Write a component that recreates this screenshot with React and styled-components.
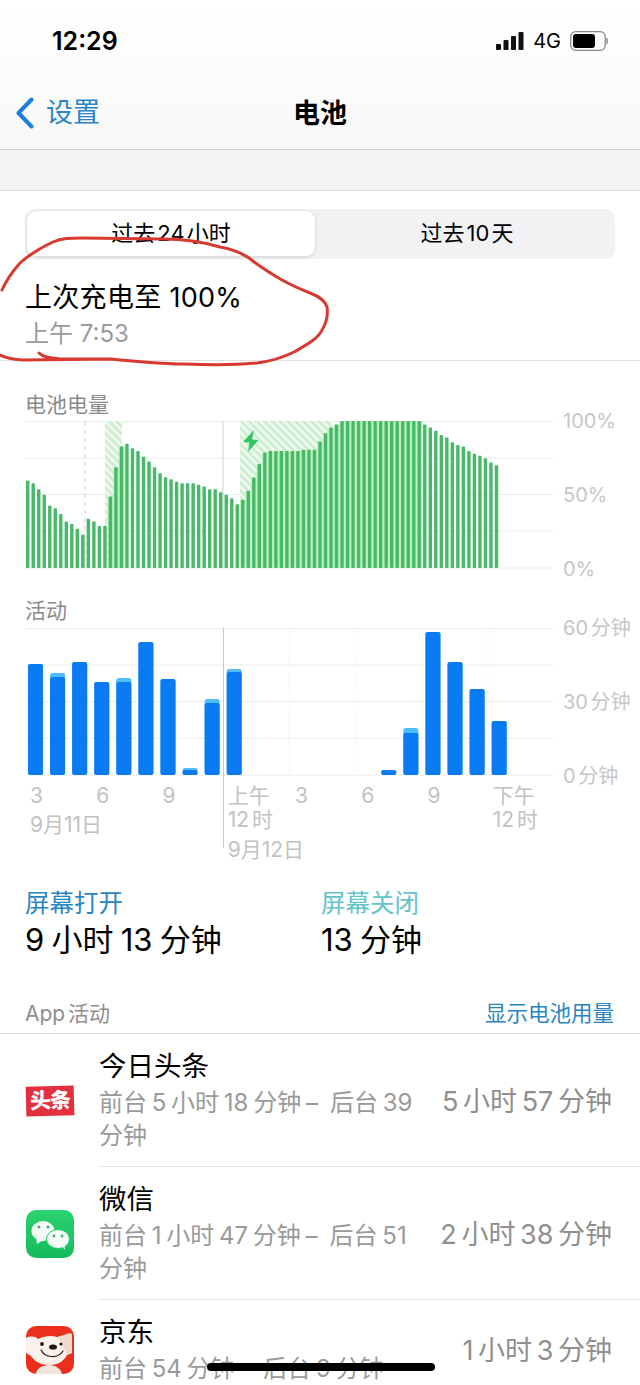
import React from 'react';
import styled, { createGlobalStyle } from 'styled-components';

const FONT = 'Inter, "Noto Sans CJK SC", sans-serif';

const GlobalStyle = createGlobalStyle`
  html, body {
    margin: 0;
    padding: 0;
    background: #fff;
  }
`;

const Screen = styled.div`
  position: relative;
  width: 640px;
  height: 1385px;
  overflow: hidden;
  background: #fff;
  color: #000;
  font-family: ${FONT};
`;

// top chrome
const Header = styled.header`
  height: 149px;
  background: linear-gradient(#ffffff, #f8f8f9);
  border-bottom: 1px solid #cfd0d2;
`;

const StatusBar = styled.div`
  height: 80px;
  display: flex;
  align-items: center;
  justify-content: space-between;
  padding: 2px 32px 0 52px;
  box-sizing: border-box;
`;

const Clock = styled.span`
  font-size: 25px;
  font-weight: 600;
`;

const StatusIcons = styled.div`
  display: flex;
  align-items: center;
  gap: 9px;
  font-size: 20px;
`;

const NavBar = styled.nav`
  position: relative;
  height: 69px;
  box-sizing: border-box;
  padding-bottom: 6px;
  display: flex;
  align-items: center;
  justify-content: center;
`;

const BackLink = styled.div`
  position: absolute;
  left: 15px;
  top: 15px;
  display: flex;
  align-items: center;
  gap: 12px;
  color: #2a84c6;
  font-size: 27px;
  line-height: 36px;
`;

const NavTitle = styled.h1`
  margin: 0;
  font-size: 27px;
  font-weight: 700;
`;

const Band = styled.div`
  height: 40px;
  background: #f3f4f6;
  border-bottom: 1px solid #dcdde0;
`;

// range switch
const Segments = styled.div`
  display: grid;
  grid-template-columns: 288px 1fr;
  margin: 18px 25px 0;
  height: 50px;
  padding: 2px 0 3px 2px;
  box-sizing: border-box;
  background: #f2f2f4;
  border-radius: 10px;
`;

const Segment = styled.div`
  display: flex;
  align-items: center;
  justify-content: center;
  box-sizing: border-box;
  padding-bottom: 5px;
  padding-left: ${(p) => (p.$active ? '0' : '4px')};
  font-size: 22px;
  word-spacing: -4px;
  border-radius: 9px;
  background: ${(p) => (p.$active ? '#fff' : 'transparent')};
  box-shadow: ${(p) => (p.$active ? '0 1px 4px rgba(0,0,0,.14)' : 'none')};
`;

const LastCharge = styled.section`
  height: 102px;
  padding: 20px 25px 0;
  box-sizing: border-box;
  border-bottom: 1px solid #e2e2e4;
`;

const ChargeTitle = styled.div`
  font-size: 27px;
  line-height: 38px;
  letter-spacing: 0.3px;
`;

const ChargeTime = styled.div`
  font-size: 24px;
  line-height: 33px;
  color: #9b9b9b;
`;

// charts
const ChartLabel = styled.div`
  padding: ${(p) => p.$top}px 0 ${(p) => p.$bottom}px 25px;
  font-size: 21px;
  line-height: 31px;
  color: #8a8a8a;
`;

const ChartRow = styled.div`
  display: flex;
  padding-left: 25px;
  gap: 8px;
`;

const ChartSvg = styled.svg`
  display: block;
  flex: none;
`;

const YAxis = styled.div`
  height: 148px;
  display: flex;
  flex-direction: column;
  justify-content: space-between;
`;

const YTick = styled.span`
  height: 0;
  display: flex;
  align-items: center;
  transform: translateY(${(p) => (p.$lift ? '-2px' : '0')});
  font-size: 20px;
  color: #c6c6c6;
  white-space: nowrap;
  word-spacing: -3px;
`;

const XAxis = styled.div`
  display: grid;
  grid-template-columns: repeat(8, 66.25px);
  padding-left: 25px;
  height: 94px;
`;

const XTick = styled.div`
  position: relative;
  padding-left: ${(p) => (p.$stack ? '4px' : '5px')};
  padding-top: 8px;
  font-size: 21px;
  line-height: 24px;
  color: #c2c2c2;
  white-space: nowrap;
  word-spacing: -3px;
`;

const TickDate = styled.div`
  padding-top: ${(p) => p.$gap}px;
`;

const ActivityMark = styled.div`
  position: absolute;
  left: 223px;
  top: 628px;
  width: 1px;
  height: 220px;
  background: #c9c9cb;
`;

// screen time summary
const Totals = styled.div`
  display: grid;
  grid-template-columns: 296px 1fr;
  padding: 16px 25px 0;
  height: 96px;
`;

const TotalLabel = styled.div`
  font-size: 24.5px;
  line-height: 34px;
  color: ${(p) => p.$color};
`;

const TotalValue = styled.div`
  font-size: 31px;
  line-height: 40px;
  word-spacing: -1.5px;
`;

// app list
const ListHead = styled.div`
  display: flex;
  align-items: center;
  justify-content: space-between;
  height: 52px;
  box-sizing: border-box;
  padding: 8px 26px 0 25px;
  border-bottom: 1px solid #dedee0;
  font-size: 21px;
  color: #8e8e8e;
  word-spacing: -3px;
`;

const ListLink = styled.span`
  color: #2a84c0;
  font-size: 21.5px;
`;

const AppRow = styled.div`
  display: flex;
  align-items: center;
`;

const AppIcon = styled.div`
  flex: none;
  width: 48px;
  height: 48px;
  margin: 0 25px 0 26px;
  display: flex;
  align-items: center;
`;

const RowBody = styled.div`
  flex: 1;
  display: flex;
  align-items: center;
  padding: 12px 28px 14px 0;
  border-bottom: ${(p) => (p.$last ? 'none' : '1px solid #e4e4e6')};
`;

const RowText = styled.div`
  width: 325px;
  flex: none;
`;

const AppName = styled.div`
  font-size: 27.5px;
  line-height: 40px;
`;

const AppDetail = styled.div`
  font-size: 24px;
  line-height: 33px;
  color: #9a9a9a;
  word-spacing: -2px;
`;

const AppTotal = styled.div`
  flex: 1;
  text-align: right;
  font-size: 27px;
  color: #8f8f8f;
  white-space: nowrap;
  word-spacing: -3px;
`;

const ToutiaoBadge = styled.div`
  flex: 1;
  height: 30px;
  background: #e2303f;
  color: #fff;
  font-size: 21px;
  font-weight: 900;
  line-height: 29px;
  text-align: center;
  letter-spacing: -1px;
  transform: rotate(-1.5deg);
`;

const HomeBar = styled.div`
  position: absolute;
  left: 207px;
  top: 1363px;
  width: 228px;
  height: 8px;
  border-radius: 4px;
  background: #000;
`;

const Scribble = styled.svg`
  position: absolute;
  left: 0;
  top: 0;
  pointer-events: none;
`;

const battery = [
  59.5, 57.7, 53.6, 49.8, 42.5, 40.7, 36.7, 31.7, 29.9, 26.7, 22.6, 33.5, 31.7, 28.5, 28.5, 48.6,
  68.6, 82.6, 84.6, 81.4, 79.6, 75.6, 72.4, 68.6, 64.5, 61.8, 60.4, 58.6, 57.7, 57.7, 57.7, 56.6,
  55.4, 53.6, 53.6, 51.6, 49.8, 47.5, 43.4, 46.4, 52.5, 61.5, 70.8, 78.5, 79.6, 79.6, 79.6, 79.6,
  79.6, 79.6, 80.5, 80.5, 80.5, 86, 91.6, 95.5, 97.7, 100, 100, 100, 100, 100, 100, 100, 100, 100,
  100, 100, 100, 100, 100, 100, 97.7, 95.6, 93.4, 90.5, 88.7, 85.5, 83.7, 82.6, 79.6, 77.8, 76.4,
  74.7, 71.7, 69.9,
];

const activity = [
  [111, 111], [98, 102], [113, 113], [93, 93], [93, 97], [133, 133], [96, 96], [5, 7], [72, 76], [103, 106],
  null, null, null, null, null, null,
  [5, 5], [42, 47], [143, 143], [113, 113], [86, 86], [54, 54],
];

const gridYs = [0.5, 37, 73.5, 110, 147];
const CHART_W = 530;
const CHART_H = 148;
const BAR_PITCH = 5.515;

// bars drawn while the phone was on the charger get a green fill in the gaps
const isCharging = (i) => (i >= 15 && i <= 17) || (i >= 39 && i <= 71);

const BatteryChart = () => (
  <ChartSvg width={CHART_W} height={CHART_H} viewBox={`0 0 ${CHART_W} ${CHART_H}`}>
    <defs>
      <pattern id="hatch" width="5.500" height="5.500" patternUnits="userSpaceOnUse" patternTransform="rotate(-45)">
        <rect width="5.500" height="5.500" fill="#cdeed1" />
        <rect width="2.750" height="5.500" fill="#f0faf1" />
      </pattern>
    </defs>
    {gridYs.map((y) => (
      <line key={y} x1="0" x2="528" y1={y} y2={y} stroke="#ececee" />
    ))}
    <line x1="60" x2="60" y1="0" y2="147" stroke="#d6d6d8" strokeDasharray="5 3" />
    <line x1="198" x2="198" y1="0" y2="147" stroke="#d2d2d4" />
    <rect x="80" y="0" width="17" height="147" fill="url(#hatch)" />
    <rect x="215" y="0" width="92" height="147" fill="url(#hatch)" />
    {battery.map((v, i) => {
      if (!isCharging(i)) return null;
      const h = (v / 100) * 147;
      return <rect key={i} x={i * BAR_PITCH} y={147 - h} width={BAR_PITCH + 0.5} height={h} fill="#bdf0c0" />;
    })}
    {battery.map((v, i) => {
      const h = (v / 100) * 147;
      return <rect key={i} x={1 + i * BAR_PITCH} y={147 - h} width="3.4" height={h} rx="0.8" fill="#48b968" />;
    })}
    <path d="M229 9 218 21l6.500.5L223 31l10.500-12-6.500-.5z" fill="#2fc55f" />
  </ChartSvg>
);

const ActivityChart = () => (
  <ChartSvg width={CHART_W} height={CHART_H} viewBox={`0 0 ${CHART_W} ${CHART_H}`}>
    {gridYs.map((y) => (
      <line key={y} x1="1" x2="528" y1={y} y2={y} stroke="#ececee" />
    ))}
    {[264, 330, 463].map((x) => (
      <line key={x} x1={x} x2={x} y1="0" y2="147" stroke="#f4f4f5" strokeDasharray="4 3" />
    ))}
    {activity.map((bar, i) => {
      if (!bar) return null;
      const x = 3 + i * 22.08;
      return (
        <g key={i}>
          <rect x={x} y={147 - bar[1]} width="15" height={bar[1]} rx="2.5" fill="#4fbdf8" />
          <rect x={x} y={147 - bar[0]} width="15" height={bar[0]} rx="2" fill="#0a7bf2" />
        </g>
      );
    })}
  </ChartSvg>
);

const WeChatIcon = () => (
  <svg width="48" height="48" viewBox="0 0 48 48">
    <defs>
      <linearGradient id="wx" x1="0" y1="0" x2="0" y2="1">
        <stop offset="0" stopColor="#2bd36f" />
        <stop offset="1" stopColor="#14bb5b" />
      </linearGradient>
    </defs>
    <rect width="48" height="48" rx="10" fill="url(#wx)" />
    <ellipse cx="17" cy="21" rx="11.500" ry="10" fill="#f4fbf7" />
    <path d="M10 27l1 7 6-4z" fill="#f4fbf7" />
    <ellipse cx="32" cy="29" rx="11.500" ry="9.500" fill="#f4fbf7" stroke="#1fc468" strokeWidth="1" />
    <path d="M36 36l3 4-.5-6z" fill="#f4fbf7" />
    <circle cx="13" cy="17" r="1.500" fill="#45a987" />
    <circle cx="22" cy="17" r="1.500" fill="#45a987" />
    <circle cx="28" cy="26" r="1.400" fill="#45a987" />
    <circle cx="36" cy="26" r="1.400" fill="#45a987" />
  </svg>
);

const JdIcon = () => (
  <svg width="48" height="48" viewBox="0 0 48 48">
    <rect width="48" height="48" rx="10" fill="#ec2f1d" />
    <path d="M10 48c0-5 6-9 13-9s12 4 13 9z" fill="#f0e6df" />
    <path d="M0 12c4-2 9-2 12 1 4-2 8-3 13-3 4 0 6 1 9 2l9-4 3 6v13l-5 2c-3 6-9 10-17 10-9 0-15-3-19-9l-5-3z" fill="#f8f1ec" />
    <path d="M31 11l13-4c1 0 2 1 2 3v16l-4 2c-3-2-4-5-5-8-1-3-3-6-6-9z" fill="#efd9cd" />
    <circle cx="16" cy="18" r="1.900" fill="#231815" />
    <circle cx="35" cy="18" r="1.600" fill="#231815" />
    <ellipse cx="27" cy="21" rx="4" ry="2.600" fill="#231815" />
    <path d="M15 24c4 8 17 9 22 1" fill="none" stroke="#231815" strokeWidth="1.200" strokeLinecap="round" />
  </svg>
);

const apps = [
  {
    name: '今日头条',
    detail: '前台 5 小时 18 分钟 –\u2002后台 39 分钟',
    total: '5 小时 57 分钟',
    icon: <ToutiaoBadge>头条</ToutiaoBadge>,
  },
  { name: '微信', detail: '前台 1 小时 47 分钟 –\u2002后台 51 分钟', total: '2 小时 38 分钟', icon: <WeChatIcon /> },
  { name: '京东', detail: '前台 54 分钟 –\u2002后台 9 分钟', total: '1 小时 3 分钟', icon: <JdIcon /> },
];

const ticks = [
  { label: '3', date: '9月11日', gap: 5 },
  { label: '6' },
  { label: '9' },
  { label: '上午', sub: '12 时', date: '9月12日', gap: 6 },
  { label: '3' },
  { label: '6' },
  { label: '9' },
  { label: '下午', sub: '12 时' },
];

export default function App() {
  return (
    <Screen>
      <GlobalStyle />
      <Header>
        <StatusBar>
          <Clock>12:29</Clock>
          <StatusIcons>
            <svg width="28" height="18" viewBox="0 0 28 18">
              <rect x="0" y="12" width="5" height="6" rx="1" fill="#111" />
              <rect x="7.500" y="8" width="5" height="10" rx="1" fill="#111" />
              <rect x="15" y="4" width="5" height="14" rx="1" fill="#111" />
              <rect x="22.500" y="0" width="5" height="18" rx="1" fill="#111" />
            </svg>
            <span>4G</span>
            <svg width="38" height="20" viewBox="0 0 38 20">
              <rect x="0.700" y="0.700" width="34.600" height="18.600" rx="5" fill="none" stroke="#8a8a8a" strokeWidth="1.300" />
              <rect x="3" y="3" width="22" height="14" rx="3" fill="#000" />
              <rect x="36.300" y="7" width="1.700" height="6" rx="0.800" fill="#9a9a9a" />
            </svg>
          </StatusIcons>
        </StatusBar>
        <NavBar>
          <BackLink>
            <svg width="19" height="32" viewBox="0 0 19 32">
              <path d="M16.500 2.500 3.500 16l13 13.500" fill="none" stroke="#1b7fe0" strokeWidth="4" strokeLinecap="round" strokeLinejoin="round" />
            </svg>
            设置
          </BackLink>
          <NavTitle>电池</NavTitle>
        </NavBar>
      </Header>
      <Band />

      <Segments>
        <Segment $active>过去 24 小时</Segment>
        <Segment>过去 10 天</Segment>
      </Segments>

      <LastCharge>
        <ChargeTitle>上次充电至 100%</ChargeTitle>
        <ChargeTime>上午 7:53</ChargeTime>
      </LastCharge>

      <ChartLabel $top={28} $bottom={1}>电池电量</ChartLabel>
      <ChartRow>
        <BatteryChart />
        <YAxis>
          <YTick>100%</YTick>
          <YTick>50%</YTick>
          <YTick>0%</YTick>
        </YAxis>
      </ChartRow>

      <ChartLabel $top={26} $bottom={2}>活动</ChartLabel>
      <ChartRow>
        <ActivityChart />
        <YAxis>
          <YTick $lift>60 分钟</YTick>
          <YTick $lift>30 分钟</YTick>
          <YTick $lift>0 分钟</YTick>
        </YAxis>
      </ChartRow>
      <XAxis>
        {ticks.map((t, i) => (
          <XTick key={i} $stack={!!t.sub}>
            {t.label}
            {t.sub && <div>{t.sub}</div>}
            {t.date && <TickDate $gap={t.gap}>{t.date}</TickDate>}
          </XTick>
        ))}
      </XAxis>
      <ActivityMark />

      <Totals>
        <div>
          <TotalLabel $color="#2a86c2">屏幕打开</TotalLabel>
          <TotalValue>9 小时 13 分钟</TotalValue>
        </div>
        <div>
          <TotalLabel $color="#63c3cb">屏幕关闭</TotalLabel>
          <TotalValue>13 分钟</TotalValue>
        </div>
      </Totals>

      <ListHead>
        <span>App 活动</span>
        <ListLink>显示电池用量</ListLink>
      </ListHead>
      {apps.map((app, i) => (
        <AppRow key={app.name}>
          <AppIcon>{app.icon}</AppIcon>
          <RowBody $last={i === apps.length - 1}>
            <RowText>
              <AppName>{app.name}</AppName>
              <AppDetail>{app.detail}</AppDetail>
            </RowText>
            <AppTotal>{app.total}</AppTotal>
          </RowBody>
        </AppRow>
      ))}

      <HomeBar />
      <Scribble width="640" height="370" viewBox="0 0 640 370">
        <path
          d="M39 353C44 358 52 358 60 359L110 359C135 361 160 364 184 364C210 365 235 365 257 363C272 361 284 357 294 352C306 345 318 339 322 330C327 322 328 314 327 307C325 300 318 296 310 293C300 289 291 285 282 280C270 273 259 266 249 258C240 252 231 249 220 247C200 241 182 239 163 239L82 238C70 238 62 238 53 242C40 248 29 255 20 263C12 272 6 281 2 290M0 355C6 358 12 359 22 360L110 359"
          fill="none"
          stroke="#d83a32"
          strokeWidth="3"
          strokeLinecap="round"
          strokeLinejoin="round"
        />
      </Scribble>
    </Screen>
  );
}
